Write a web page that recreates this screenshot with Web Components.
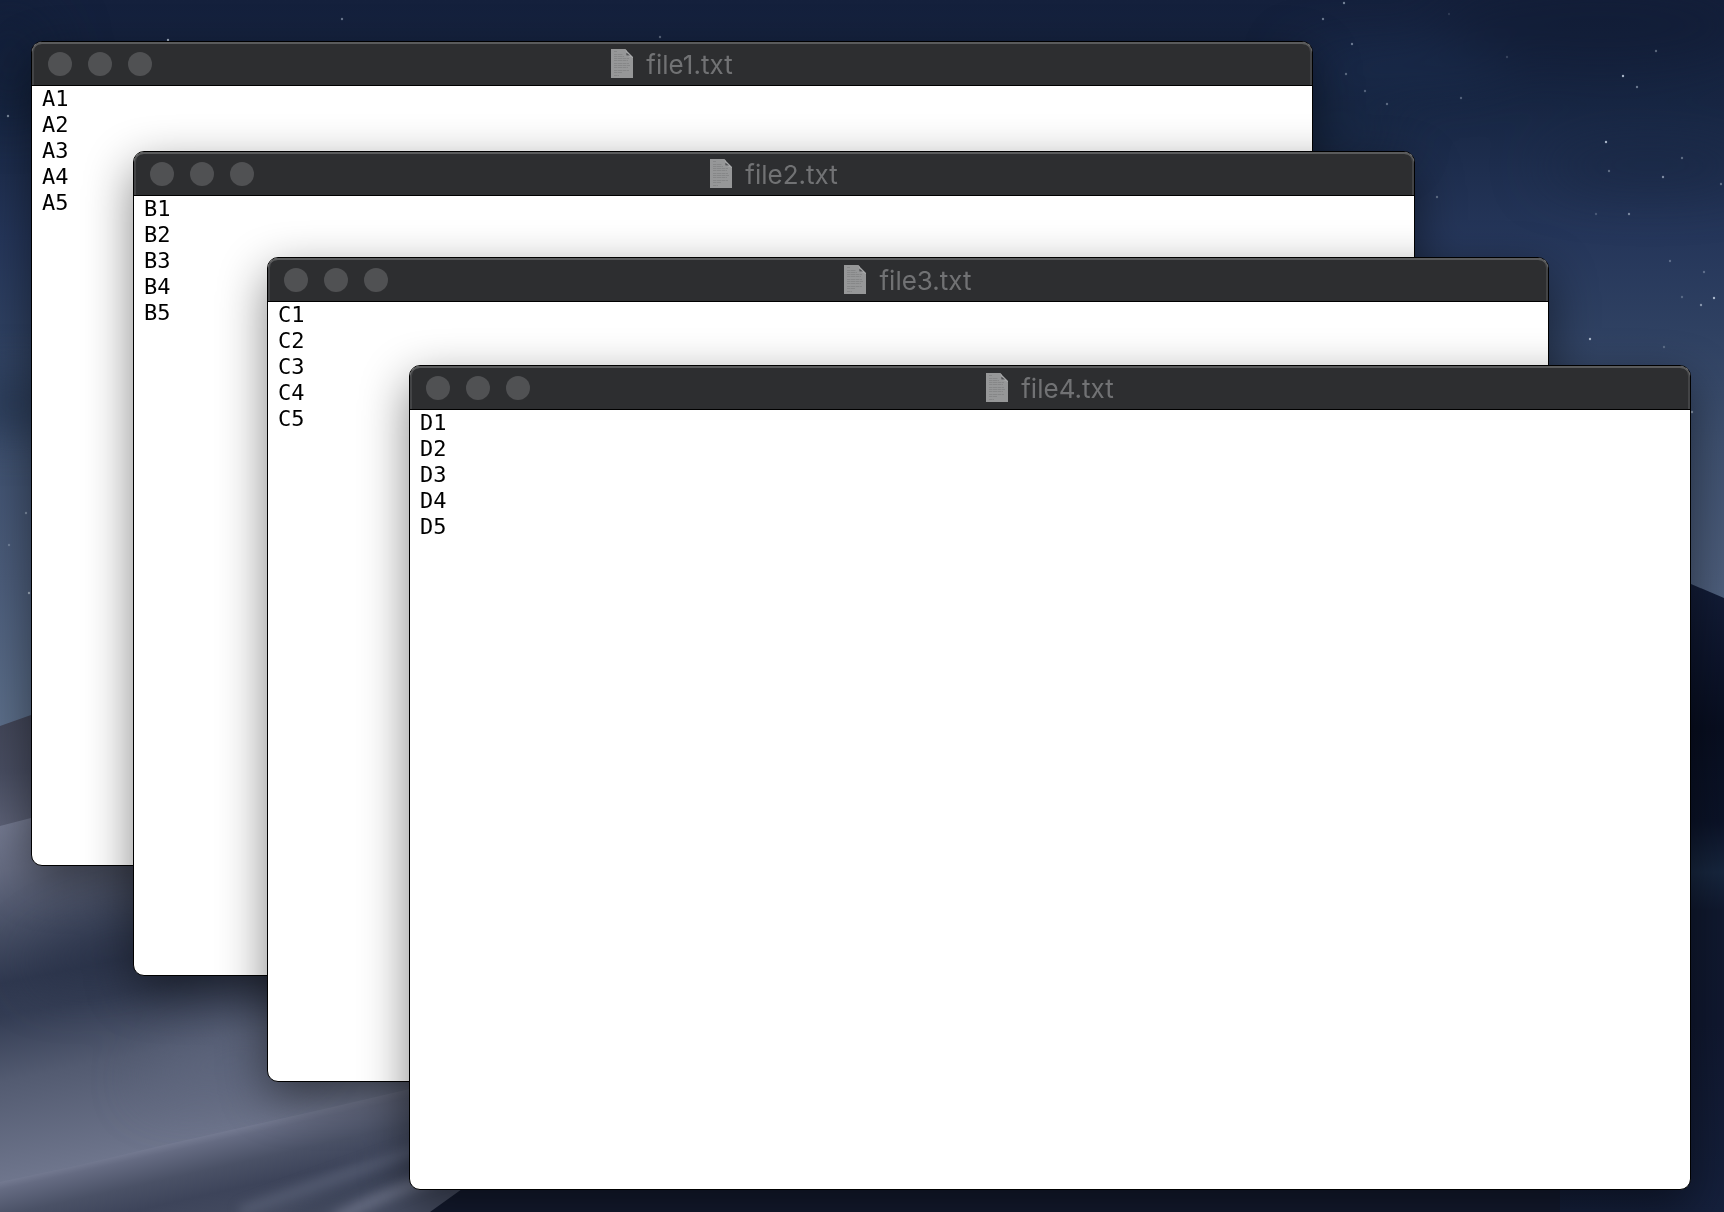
<!DOCTYPE html>
<html lang="en">
<head>
<meta charset="utf-8">
<title>Desktop</title>
<style>
html, body { margin: 0; height: 100%; overflow: hidden; background: #14213c; }
file-window:nth-of-type(1) { left: 31px; top: 41px; }
file-window:nth-of-type(2) { left: 133px; top: 151px; }
file-window:nth-of-type(3) { left: 267px; top: 257px; }
file-window:nth-of-type(4) { left: 409px; top: 365px; }
</style>
</head>
<body>
<desk-top>
  <file-window name="file1.txt"><div>A1</div><div>A2</div><div>A3</div><div>A4</div><div>A5</div></file-window>
  <file-window name="file2.txt"><div>B1</div><div>B2</div><div>B3</div><div>B4</div><div>B5</div></file-window>
  <file-window name="file3.txt"><div>C1</div><div>C2</div><div>C3</div><div>C4</div><div>C5</div></file-window>
  <file-window name="file4.txt"><div>D1</div><div>D2</div><div>D3</div><div>D4</div><div>D5</div></file-window>
</desk-top>

<template id="desktop-template">
  <style>
    :host { display: block; position: relative; height: 100vh; overflow: hidden; }
    desk-wallpaper { position: absolute; inset: 0; }
  </style>
  <desk-wallpaper></desk-wallpaper>
  <slot></slot>
</template>

<template id="wallpaper-template">
  <style>
    :host { display: block; }
    svg { display: block; width: 100%; height: 100%; }
  </style>
  <svg viewBox="0 0 1724 1212" preserveAspectRatio="xMidYMid slice" aria-hidden="true">
    <defs>
      <linearGradient id="sky" gradientUnits="userSpaceOnUse" x1="0" y1="0" x2="0" y2="740">
        <stop offset="0" stop-color="#14203c"/>
        <stop offset=".14" stop-color="#172643"/>
        <stop offset=".32" stop-color="#25365a"/>
        <stop offset=".45" stop-color="#2f4162"/>
        <stop offset=".6" stop-color="#3f5170"/>
        <stop offset=".78" stop-color="#4c5d7b"/>
        <stop offset="1" stop-color="#5d708b"/>
      </linearGradient>
      <linearGradient id="farDune" gradientUnits="userSpaceOnUse" x1="0" y1="715" x2="0" y2="825">
        <stop offset="0" stop-color="#424658"/>
        <stop offset=".5" stop-color="#484d61"/>
        <stop offset="1" stop-color="#5b6075"/>
      </linearGradient>
      <linearGradient id="midDune" gradientUnits="userSpaceOnUse" x1="0" y1="820" x2="70" y2="1170">
        <stop offset="0" stop-color="#757b92"/>
        <stop offset=".14" stop-color="#666c82"/>
        <stop offset=".3" stop-color="#474f65"/>
        <stop offset=".45" stop-color="#2f384f"/>
        <stop offset=".54" stop-color="#343d54"/>
        <stop offset=".72" stop-color="#535b71"/>
        <stop offset="1" stop-color="#6f768d"/>
      </linearGradient>
      <linearGradient id="nearDune" gradientUnits="userSpaceOnUse" x1="180" y1="1137" x2="202" y2="1235">
        <stop offset="0" stop-color="#7c8299"/>
        <stop offset=".12" stop-color="#656b82"/>
        <stop offset=".38" stop-color="#4a5166"/>
        <stop offset=".62" stop-color="#3d445a"/>
        <stop offset="1" stop-color="#454c61"/>
      </linearGradient>
      <linearGradient id="rightDune" gradientUnits="userSpaceOnUse" x1="0" y1="583" x2="0" y2="1212">
        <stop offset="0" stop-color="#131d38"/>
        <stop offset=".12" stop-color="#0d152c"/>
        <stop offset=".23" stop-color="#080e20"/>
        <stop offset=".38" stop-color="#0b1328"/>
        <stop offset=".46" stop-color="#17263e"/>
        <stop offset=".52" stop-color="#10192f"/>
        <stop offset=".7" stop-color="#101830"/>
        <stop offset="1" stop-color="#15203c"/>
      </linearGradient>
      <filter id="soft" color-interpolation-filters="sRGB" x="-50%" y="-50%" width="200%" height="200%"><feGaussianBlur stdDeviation="6"/></filter>
      <filter id="haze" color-interpolation-filters="sRGB" x="-100%" y="-100%" width="300%" height="300%"><feGaussianBlur stdDeviation="26"/></filter>
    </defs>
    <rect width="1724" height="1212" fill="url(#sky)"/>
    <g filter="url(#haze)">
      <ellipse cx="1600" cy="25" rx="160" ry="45" fill="#0f1932" opacity=".5"/>
      <ellipse cx="1400" cy="65" rx="110" ry="16" fill="#1d3153" opacity=".6"/>
      <ellipse cx="1650" cy="165" rx="110" ry="22" fill="#172440" opacity=".6"/>
      <ellipse cx="1330" cy="135" rx="70" ry="24" fill="#14233c" opacity=".5"/>
      <ellipse cx="15" cy="405" rx="50" ry="22" fill="#1e2e48" opacity=".8"/>
      <ellipse cx="10" cy="60" rx="50" ry="60" fill="#101c33" opacity=".4"/>
    </g>
    <path d="M0 726 31 715 460 590V900H0Z" fill="url(#farDune)"/>
    <path d="M0 826 31 818 300 770H470V1100L0 1190Z" fill="url(#midDune)"/>
    <g filter="url(#haze)">
      <ellipse cx="110" cy="950" rx="80" ry="30" fill="#262e45" opacity=".6" transform="rotate(-15 110 950)"/>
      <ellipse cx="230" cy="1060" rx="90" ry="30" fill="#626a81" opacity=".5" transform="rotate(-15 230 1060)"/>
    </g>
    <path d="M0 1182 80 1165 160 1146 240 1128 320 1110 410 1089 600 1050V1212H0Z" fill="url(#nearDune)"/>
    <g filter="url(#soft)" fill="none" stroke-width="9">
      <path d="M240 1212Q330 1180 430 1144" stroke="#646b81" opacity=".65"/>
      <path d="M335 1220Q390 1190 460 1170" stroke="#757b90" opacity=".85"/>
      <path d="M290 1220Q350 1190 430 1160" stroke="#343b50" opacity=".5"/>
    </g>
    <path d="M430 1212 462 1189 530 1140H1724V1212Z" fill="#141b30"/>
    <path d="M1560 560Q1630 562 1691 584L1724 598V1212H1560Z" fill="url(#rightDune)"/>
    <g id="stars" fill="#c2cfdf"></g>
  </svg>
</template>

<template id="window-template">
  <style>
    :host {
      position: absolute; box-sizing: border-box;
      display: flex; flex-direction: column;
      width: calc(100% - 442px); height: calc(100% - 387px);
      border: 1px solid #000; border-radius: 11px;
      background: #fff; overflow: hidden;
      box-shadow: 0 16px 48px rgba(0, 0, 0, .48);
    }
    header {
      display: grid; grid-template-columns: 1fr auto 1fr; align-items: center;
      box-sizing: border-box; height: 44px; padding: 0 16px;
      background: #2d2e30; border-bottom: 1px solid #000;
      border-radius: 10px 10px 0 0;
      box-shadow: inset 0 2px 0 #5a5b5c, inset 2px 0 0 #434446, inset -2px 0 0 #434446;
    }
    .lights { display: flex; gap: 16px; }
    button { width: 24px; height: 24px; padding: 0; border: 0; border-radius: 50%; background: #505153; }
    .title { display: flex; align-items: center; gap: 13px; }
    h1 { margin: 0; padding-top: 2px; font: 400 26px/30px Inter, "Liberation Sans", sans-serif; color: #717274; }
    main { flex: 1; padding: 0 10px; font: 22px/26px "DejaVu Sans Mono", monospace; color: #000; }
  </style>
  <header>
    <div class="lights">
      <button type="button" aria-label="Close"></button>
      <button type="button" aria-label="Minimize"></button>
      <button type="button" aria-label="Zoom"></button>
    </div>
    <div class="title"><document-icon></document-icon><h1></h1></div>
  </header>
  <main><slot></slot></main>
</template>

<template id="document-template">
  <style>
    :host { display: block; }
    svg { display: block; }
  </style>
  <svg width="22" height="29" viewBox="0 0 22 29" aria-hidden="true">
    <path d="M0 0H13.5C15.5 0 16 2 16.2 3.5 16.4 6.4 22 6.5 22 10V29H0Z" fill="#969798"/>
    <path d="M14 0 22 8V10C20.5 7 17 7 15.2 7 15.6 4 15.2 2 14 0Z" fill="#a8a9aa"/>
    <path d="M15.3 3.5V6.5H19Z" fill="#515254"/>
    <path d="M3 2.5H6M3 5.5H12M3 7.5H13M3 9.5H18M3 11.5H17M3 14.5H18M3 16.5H19M3 18.5H17M3 21.5H18M3 23.5H11M3 26.5H8" stroke="#868788" stroke-width="1" stroke-dasharray="3 .5 5 .5"/>
  </svg>
</template>

<script>
const stamp = (host, id) => {
  const root = host.attachShadow({ mode: "open" });
  root.append(document.getElementById(id).content.cloneNode(true));
  return root;
};

// x, y, brightness
const STARS = [
  [168, 40, .8], [342, 19, .5], [660, 37, .4], [1344, 3, .55], [1323, 19, .5], [1352, 44, .5],
  [1346, 74, .4], [1365, 91, .35], [1387, 104, .4], [1461, 98, .35], [1449, 14, .15], [1507, 57, .2],
  [1656, 51, .4], [1623, 76, .85], [1637, 87, .5], [1606, 142, .85], [1609, 171, .4], [1663, 177, .6],
  [1682, 158, .4], [1721, 184, .4], [1596, 214, .25], [1629, 214, .55], [1437, 197, .4], [1670, 261, .35],
  [1704, 272, .35], [1682, 297, .3], [1701, 305, .6], [1714, 298, .85], [1590, 339, .85], [1664, 347, .3],
  [1692, 412, .6], [8, 116, .6], [26, 513, .5], [9, 545, .35], [29, 593, .8]
];

customElements.define("document-icon", class extends HTMLElement {
  constructor() { super(); stamp(this, "document-template"); }
});

customElements.define("desk-wallpaper", class extends HTMLElement {
  constructor() {
    super();
    const sky = stamp(this, "wallpaper-template").getElementById("stars");
    for (const [x, y, glow] of STARS) {
      const star = document.createElementNS("http://www.w3.org/2000/svg", "circle");
      star.setAttribute("cx", x);
      star.setAttribute("cy", y);
      star.setAttribute("r", 1.2);
      star.setAttribute("opacity", glow);
      sky.append(star);
    }
  }
});

customElements.define("file-window", class extends HTMLElement {
  constructor() {
    super();
    stamp(this, "window-template").querySelector("h1").textContent = this.getAttribute("name");
  }
});

customElements.define("desk-top", class extends HTMLElement {
  constructor() { super(); stamp(this, "desktop-template"); }
});
</script>
</body>
</html>
